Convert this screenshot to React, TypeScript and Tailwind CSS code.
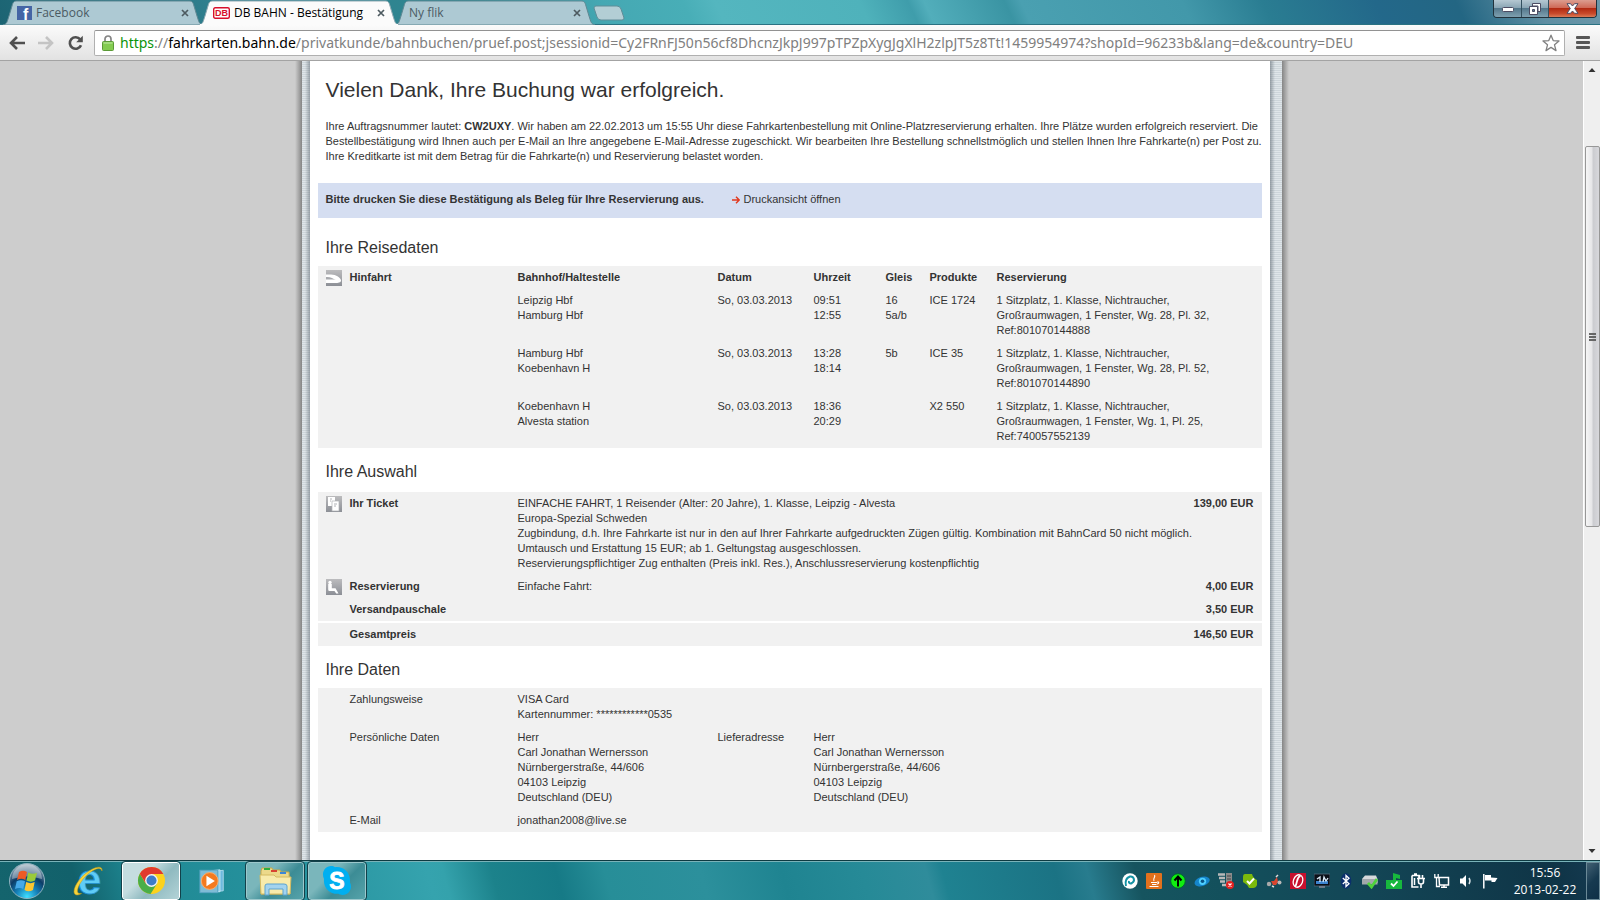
import type { ReactNode } from "react";

const PAGE_FONT = "font-['Liberation_Sans',Arial,sans-serif]";
const UI_FONT = "font-['Open_Sans','Noto_Sans',sans-serif]";

function TabShape({ active = false }: { active?: boolean }) {
  return (
    <svg className="absolute inset-0 h-full w-full" viewBox="0 0 200 25" preserveAspectRatio="none" aria-hidden="true">
      <path
        d="M0 25 C4 24 4 22 6 16 L9 6 C10 2 11 1 14 1 H186 C189 1 190 2 191 6 L194 16 C196 22 196 24 200 25 Z"
        fill={active ? "#fbfbfb" : "#adc9d3"}
        stroke={active ? "#8fa9b2" : "#5f8893"}
        strokeWidth="1"
      />
      {active && <rect x="1" y="24" width="198" height="2" fill="#fbfbfb" />}
    </svg>
  );
}

function CloseGlyph() {
  return (
    <svg width="8" height="8" viewBox="0 0 8 8" aria-hidden="true">
      <path d="M1 1 L7 7 M7 1 L1 7" stroke="#4d5a60" strokeWidth="1.7" />
    </svg>
  );
}

function Tab({ icon, label, active = false }: { icon?: ReactNode; label: string; active?: boolean }) {
  return (
    <div className={`relative -mr-[4px] h-[25px] w-[200px] ${active ? "z-10" : ""}`}>
      <TabShape active={active} />
      <div className="relative flex h-full items-center px-[14px]">
        <button className={`flex flex-1 items-center gap-[4px] text-left text-[12px] leading-[16px] ${active ? "text-black" : "text-[#4b5b63]"}`}>
          {icon}
          <span className="whitespace-nowrap">{label}</span>
        </button>
        <button aria-label={`${label} schließen`}>
          <CloseGlyph />
        </button>
      </div>
    </div>
  );
}

function FacebookIcon() {
  return (
    <svg width="15" height="14" viewBox="0 0 15 14" aria-hidden="true">
      <rect width="15" height="14" fill="#4565a5" />
      <text x="6" y="14" fontSize="16" fontWeight="700" fill="#fff" fontFamily="Liberation Sans, sans-serif">f</text>
    </svg>
  );
}

function DbIcon() {
  return (
    <svg width="17" height="12" viewBox="0 0 17 12" aria-hidden="true">
      <rect x=".7" y=".7" width="15.6" height="10.6" rx="1.5" fill="#fff" stroke="#d80f2b" strokeWidth="1.4" />
      <text x="8.5" y="9.3" fontSize="9" fontWeight="700" textAnchor="middle" fill="#d80f2b" fontFamily="Liberation Sans, sans-serif">DB</text>
    </svg>
  );
}

function TitleBar() {
  return (
    <header className="relative flex h-[25px] shrink-0 items-start border-b border-[#2a7282] bg-[linear-gradient(65deg,#1c6473_0%,#2f7f8e_14%,#2f8791_30%,#45a8b3_38%,#48aeb7_43%,#54b6bf_45%,#4fb2bb_54%,#3f9dab_57%,#52aebb_58%,#3a94a3_63%,#4aa0b1_64%,#4298aa_74%,#2a7d92_79%,#23688a_86%,#236683_91%,#5e8ea2_96%,#6b98aa_100%)]">
      <nav className="flex items-start pl-[3px]">
        <Tab icon={<FacebookIcon />} label="Facebook" />
        <Tab icon={<DbIcon />} label="DB BAHN - Bestätigung" active />
        <Tab label="Ny flik" />
        <button aria-label="Ny flik" className="ml-[2px] mt-[5px]">
          <svg width="32" height="16" viewBox="0 0 32 16" aria-hidden="true">
            <path d="M3 1 H24 Q27 1 28 4 L31 13 Q31 15 29 15 H8 Q5 15 4 12 L1 3 Q1 1 3 1 Z" fill="#b3ced5" stroke="#5f8d98" />
          </svg>
        </button>
      </nav>
      <div className="ml-auto mr-[3px] flex h-[18px] overflow-hidden rounded-b-[4px] border border-t-0 border-[#22323c]">
        <button aria-label="Minimieren" className="flex w-[28px] items-center justify-center border-r border-[#33505f] bg-[linear-gradient(#b5c8d2,#8ba6b5_45%,#54788c_50%,#7fa0b0)]">
          <svg width="12" height="6" viewBox="0 0 12 6" className="mt-[3px]" aria-hidden="true">
            <rect x=".5" y=".5" width="11" height="4" rx="1" fill="#fff" stroke="#4c4c63" />
          </svg>
        </button>
        <button aria-label="Verkleinern" className="flex w-[27px] items-center justify-center border-r border-[#33505f] bg-[linear-gradient(#b5c8d2,#8ba6b5_45%,#54788c_50%,#7fa0b0)]">
          <svg width="12" height="12" viewBox="0 0 12 12" aria-hidden="true">
            <path d="M3.5 .5 H11.5 V8.5 H9 V3 H3.5 Z" fill="#fff" stroke="#4c4c63" />
            <path d="M.5 3.5 H8.5 V11.5 H.5 Z M3.5 6.5 V8.5 H5.5 V6.5 Z" fill="#fff" fillRule="evenodd" stroke="#4c4c63" />
          </svg>
        </button>
        <button aria-label="Schließen" className="flex w-[47px] items-center justify-center bg-[linear-gradient(#dc9d8f,#cf6a57_45%,#b22a12_50%,#c84a2b_80%,#db7a55)]">
          <svg width="13" height="11" viewBox="0 0 13 11" aria-hidden="true">
            <path d="M1 .7 H4.5 L6.5 3 L8.5 .7 H12 L8.7 5.5 L12 10.3 H8.5 L6.5 8 L4.5 10.3 H1 L4.3 5.5 Z" fill="#fff" stroke="#4c4c63" />
          </svg>
        </button>
      </div>
    </header>
  );
}

function Toolbar() {
  return (
    <div className="flex h-[36px] shrink-0 items-center border-b border-[#a3a3a3] bg-[linear-gradient(#fbfbfb,#e2e2e2)] pl-[9px] pr-[10px]">
      <button aria-label="Zurück" className="mr-[13px]">
        <svg width="16" height="14" viewBox="0 0 16 14" aria-hidden="true">
          <path d="M8 1 L2 7 L8 13 M2.5 7 H16" fill="none" stroke="#505050" strokeWidth="2.6" />
        </svg>
      </button>
      <button aria-label="Vorwärts" className="mr-[13px]">
        <svg width="16" height="14" viewBox="0 0 16 14" aria-hidden="true">
          <path d="M8 1 L14 7 L8 13 M13.5 7 H0" fill="none" stroke="#c4c4c4" strokeWidth="2.6" />
        </svg>
      </button>
      <button aria-label="Neu laden" className="mr-[10px]">
        <svg width="17" height="16" viewBox="0 0 17 16" aria-hidden="true">
          <path d="M13.2 4.4 A5.8 5.8 0 1 0 14 10.2" fill="none" stroke="#505050" strokeWidth="2.6" />
          <path d="M15.8 .8 V7.2 H9.2 Z" fill="#505050" />
        </svg>
      </button>
      <div className="flex h-[26px] min-w-0 flex-1 items-center rounded-[2px] border border-[#b0b0b0] border-t-[#929292] bg-white pl-[7px] pr-[4px]">
        <svg width="12" height="16" viewBox="0 0 12 16" className="mr-[6px] shrink-0" aria-hidden="true">
          <path d="M3 8 V4 A3 3 0 0 1 9 4 V8" fill="none" stroke="#858585" strokeWidth="1.7" />
          <rect x=".5" y="6.5" width="11" height="9" rx="1" fill="#83cb50" stroke="#5b9a37" />
          <path d="M1.5 8 H10.5" stroke="#c3ebaa" />
        </svg>
        <div role="textbox" aria-label="Adresse" className="min-w-0 flex-1 overflow-hidden whitespace-nowrap font-['Noto_Sans',sans-serif] text-[14px] leading-[20px] text-[#808080]">
          <span className="text-[#0a930a]">https</span>://<span className="text-black">fahrkarten.bahn.de</span>/privatkunde/bahnbuchen/pruef.post;jsessionid=Cy2FRnFJ50n56cf8DhcnzJkpJ997pTPZpXygJgXlH2zlpJT5z8Tt!1459954974?shopId=96233b&amp;lang=de&amp;country=DEU
        </div>
        <button aria-label="Lesezeichen">
          <svg width="18" height="18" viewBox="0 0 18 18" aria-hidden="true">
            <path d="M9 1.2 L11.2 6.6 L17 7 L12.5 10.8 L14 16.6 L9 13.4 L4 16.6 L5.5 10.8 L1 7 L6.8 6.6 Z" fill="#fff" stroke="#808080" strokeWidth="1.3" strokeLinejoin="round" />
          </svg>
        </button>
      </div>
      <button aria-label="Menü" className="ml-[11px] flex w-[14px] flex-col gap-[2px]">
        <span className="h-[3px] rounded-[1px] bg-[#565656]" />
        <span className="h-[3px] rounded-[1px] bg-[#565656]" />
        <span className="h-[3px] rounded-[1px] bg-[#565656]" />
      </button>
    </div>
  );
}

function RowIcon({ kind }: { kind: "train" | "ticket" | "seat" }) {
  return (
    <svg width="16" height="16" viewBox="0 0 16 16" aria-hidden="true">
      <defs>
        <linearGradient id={`g-${kind}`} x1="0" y1="0" x2="0" y2="1">
          <stop offset="0" stopColor="#bcbcbe" />
          <stop offset="1" stopColor="#8c8f96" />
        </linearGradient>
      </defs>
      <rect width="16" height="16" fill={`url(#g-${kind})`} />
      {kind === "train" && (
        <>
          <path d="M0 4.5 H5 C10 4.5 15 8 15 10.5 C15 12.5 12 13 9 13 H0 Z" fill="#fff" />
          <path d="M0 7 C4 6.5 7 8 9.5 10 H0 Z" fill="#a9abaf" />
          <path d="M0 9.5 H9 V10.5 H0 Z" fill="#fff" />
        </>
      )}
      {kind === "ticket" && (
        <>
          <rect x="2" y="1" width="7" height="9" fill="#fff" />
          <rect x="6" y="5" width="7" height="10" fill="#fff" stroke="#b0b2b6" strokeWidth=".7" />
          <path d="M4 3 H6 M4 5 H5 M8 8 H11 M8 10 H10" stroke="#b0b2b6" />
        </>
      )}
      {kind === "seat" && (
        <>
          <circle cx="4" cy="3.5" r="1.7" fill="#fff" />
          <path d="M2.2 5 H5.8 V9.3 H9.5 L12.5 14.5 H10.2 L8.5 12 H3.5 Q2.2 12 2.2 10.5 Z" fill="#fff" />
        </>
      )}
    </svg>
  );
}

const legs = [
  { from: "Leipzig Hbf", to: "Hamburg Hbf", date: "So, 03.03.2013", dep: "09:51", arr: "12:55", p1: "16", p2: "5a/b", product: "ICE 1724", wagon: "Wg. 28, Pl. 32,", ref: "801070144888" },
  { from: "Hamburg Hbf", to: "Koebenhavn H", date: "So, 03.03.2013", dep: "13:28", arr: "18:14", p1: "5b", p2: "", product: "ICE 35", wagon: "Wg. 28, Pl. 52,", ref: "801070144890" },
  { from: "Koebenhavn H", to: "Alvesta station", date: "So, 03.03.2013", dep: "18:36", arr: "20:29", p1: "", p2: "", product: "X2 550", wagon: "Wg. 1, Pl. 25,", ref: "740057552139" },
];

const cell = "py-[4px] pr-0 pl-0 text-left align-top";

function SectionTitle({ children }: { children: ReactNode }) {
  return <h2 className="px-[8px] text-[16px] leading-[20px]">{children}</h2>;
}

function Journey() {
  return (
    <section className="mt-[20px]">
      <SectionTitle>Ihre Reisedaten</SectionTitle>
      <table className="mt-[8px] w-full table-fixed border-collapse bg-[#f1f1f1]">
        <colgroup>
          <col className="w-[32px]" />
          <col className="w-[168px]" />
          <col className="w-[200px]" />
          <col className="w-[96px]" />
          <col className="w-[72px]" />
          <col className="w-[44px]" />
          <col className="w-[67px]" />
          <col />
        </colgroup>
        <thead>
          <tr>
            <td className="pl-[8px] pt-[4px] align-top"><RowIcon kind="train" /></td>
            {["Hinfahrt", "Bahnhof/Haltestelle", "Datum", "Uhrzeit", "Gleis", "Produkte", "Reservierung"].map((h) => (
              <th key={h} className={cell}>{h}</th>
            ))}
          </tr>
        </thead>
        <tbody>
          {legs.map((l) => (
            <tr key={l.ref}>
              <td />
              <td />
              <td className={cell}>{l.from}<br />{l.to}</td>
              <td className={cell}>{l.date}</td>
              <td className={cell}>{l.dep}<br />{l.arr}</td>
              <td className={cell}>{l.p1}<br />{l.p2}</td>
              <td className={cell}>{l.product}</td>
              <td className={cell}>
                1 Sitzplatz, 1. Klasse, Nichtraucher,<br />
                Großraumwagen, 1 Fenster, {l.wagon}<br />
                Ref:{l.ref}
              </td>
            </tr>
          ))}
        </tbody>
      </table>
    </section>
  );
}

function Selection() {
  return (
    <section className="mt-[14px]">
      <SectionTitle>Ihre Auswahl</SectionTitle>
      <table className="mt-[10px] w-full table-fixed border-collapse bg-[#f1f1f1]">
        <colgroup>
          <col className="w-[32px]" />
          <col className="w-[168px]" />
          <col />
          <col className="w-[72px]" />
        </colgroup>
        <tbody>
          <tr>
            <td className="pl-[8px] pt-[4px] align-top"><RowIcon kind="ticket" /></td>
            <th className={cell}>Ihr Ticket</th>
            <td className={`${cell} whitespace-nowrap`}>
              EINFACHE FAHRT, 1 Reisender (Alter: 20 Jahre), 1. Klasse, Leipzig - Alvesta<br />
              Europa-Spezial Schweden<br />
              Zugbindung, d.h. Ihre Fahrkarte ist nur in den auf Ihrer Fahrkarte aufgedruckten Zügen gültig. Kombination mit BahnCard 50 nicht möglich.<br />
              Umtausch und Erstattung 15 EUR; ab 1. Geltungstag ausgeschlossen.<br />
              Reservierungspflichtiger Zug enthalten (Preis inkl. Res.), Anschlussreservierung kostenpflichtig
            </td>
            <td className="py-[4px] pr-[8px] text-right align-top font-bold">139,00 EUR</td>
          </tr>
          <tr>
            <td className="pl-[8px] pt-[4px] align-top"><RowIcon kind="seat" /></td>
            <th className={cell}>Reservierung</th>
            <td className={cell}>Einfache Fahrt:</td>
            <td className="py-[4px] pr-[8px] text-right align-top font-bold">4,00 EUR</td>
          </tr>
          <tr>
            <td />
            <th className={cell}>Versandpauschale</th>
            <td />
            <td className="py-[4px] pr-[8px] text-right align-top font-bold">3,50 EUR</td>
          </tr>
        </tbody>
        <tfoot>
          <tr className="border-t-2 border-white">
            <td />
            <th className={cell}>Gesamtpreis</th>
            <td />
            <td className="py-[4px] pr-[8px] text-right align-top font-bold">146,50 EUR</td>
          </tr>
        </tfoot>
      </table>
    </section>
  );
}

function Address() {
  return (
    <>
      Herr<br />
      Carl Jonathan Wernersson<br />
      Nürnbergerstraße, 44/606<br />
      04103 Leipzig<br />
      Deutschland (DEU)
    </>
  );
}

function PersonalData() {
  return (
    <section className="mt-[14px]">
      <SectionTitle>Ihre Daten</SectionTitle>
      <table className="mt-[8px] w-full table-fixed border-collapse bg-[#f1f1f1]">
        <colgroup>
          <col className="w-[32px]" />
          <col className="w-[168px]" />
          <col className="w-[200px]" />
          <col className="w-[96px]" />
          <col />
        </colgroup>
        <tbody>
          <tr>
            <td />
            <td className={cell}>Zahlungsweise</td>
            <td className={cell} colSpan={3}>VISA Card<br />Kartennummer: ************0535</td>
          </tr>
          <tr>
            <td />
            <td className={cell}>Persönliche Daten</td>
            <td className={cell}><Address /></td>
            <td className={cell}>Lieferadresse</td>
            <td className={cell}><Address /></td>
          </tr>
          <tr>
            <td />
            <td className={cell}>E-Mail</td>
            <td className={cell} colSpan={3}>jonathan2008@live.se</td>
          </tr>
        </tbody>
      </table>
    </section>
  );
}

function Rail({ left = false }: { left?: boolean }) {
  return (
    <div className={`shrink-0 ${left ? "w-[8px] bg-[linear-gradient(270deg,rgba(90,100,110,.5),transparent_5px),repeating-linear-gradient(#dfe5e9_0_1px,#cdd5da_1px_2px)]" : "w-[12px] bg-[linear-gradient(90deg,rgba(90,100,110,.55),transparent_5px),repeating-linear-gradient(#dfe5e9_0_1px,#cdd5da_1px_2px)]"}`} />
  );
}

function Page() {
  return (
    <main className={`flex min-w-0 flex-1 justify-center overflow-hidden bg-[#cdcdcd] text-[11px] leading-[15px] text-[#333] ${PAGE_FONT}`}>
      <div className="w-[7px] bg-[linear-gradient(90deg,#cdcdcd,#858585)]" />
      <Rail left />
      <div className="w-full max-w-[960px] bg-white px-[8px]">
        <h1 className="px-[8px] pt-[16px] text-[21px] leading-[26px]">Vielen Dank, Ihre Buchung war erfolgreich.</h1>
        <p className="whitespace-nowrap px-[8px] pt-[16px]">
          Ihre Auftragsnummer lautet: <b>CW2UXY</b>. Wir haben am 22.02.2013 um 15:55 Uhr diese Fahrkartenbestellung mit Online-Platzreservierung erhalten. Ihre Plätze wurden erfolgreich reserviert. Die<br />
          Bestellbestätigung wird Ihnen auch per E-Mail an Ihre angegebene E-Mail-Adresse zugeschickt. Wir bearbeiten Ihre Bestellung schnellstmöglich und stellen Ihnen Ihre Fahrkarte(n) per Post zu.<br />
          Ihre Kreditkarte ist mit dem Betrag für die Fahrkarte(n) und Reservierung belastet worden.
        </p>
        <div className="mt-[19px] flex h-[35px] items-center bg-[#d5def1] px-[8px] pb-[2px]">
          <b className="min-w-[398px]">Bitte drucken Sie diese Bestätigung als Beleg für Ihre Reservierung aus.</b>
          <a href="#druck" className="ml-[8px] flex items-center gap-[4px]">
            <svg width="8" height="8" viewBox="0 0 8 8" aria-hidden="true">
              <path d="M0 4 H7 M4 .8 L7.2 4 L4 7.2" fill="none" stroke="#e2381d" strokeWidth="1.4" />
            </svg>
            Druckansicht öffnen
          </a>
        </div>
        <Journey />
        <Selection />
        <PersonalData />
      </div>
      <Rail />
      <div className="w-[7px] bg-[linear-gradient(90deg,#858585,#cdcdcd)]" />
    </main>
  );
}

function Scrollbar() {
  return (
    <aside className="flex w-[17px] shrink-0 flex-col items-center border-l border-white bg-[#efefef]">
      <svg width="8" height="18" viewBox="0 0 8 18" aria-hidden="true"><path d="M.5 11 L4 7 L7.5 11 Z" fill="#333" /></svg>
      <div className="h-[67px]" />
      <div className="flex h-[381px] w-[15px] flex-col items-center justify-center gap-[1px] rounded-[2px] border border-[#979797] bg-[linear-gradient(90deg,#f6f6f6,#e6e6e8_45%,#cbccd0_55%,#d8d8dc)]">
        <span className="h-[2px] w-[7px] bg-[#666]" />
        <span className="h-[2px] w-[7px] bg-[#666]" />
        <span className="h-[2px] w-[7px] bg-[#666]" />
      </div>
      <svg className="mt-auto" width="8" height="18" viewBox="0 0 8 18" aria-hidden="true"><path d="M.5 7 L4 11 L7.5 7 Z" fill="#333" /></svg>
    </aside>
  );
}

function TaskButton({ label, children, active = false }: { label: string; children: ReactNode; active?: boolean }) {
  return (
    <button
      aria-label={label}
      className={`mr-[4px] flex h-[38px] w-[58px] items-center justify-center rounded-[3px] border outline outline-[#12414a] ${active ? "border-white bg-[linear-gradient(135deg,#c5dde0_0%,#c5dde0_35%,#8fbac0_60%,#b3d3d7)]" : "border-[#9cc8cc] bg-[linear-gradient(135deg,#7ab6bb_0%,#7ab6bb_35%,#3c8c95_60%,#56a3aa)]"}`}
    >
      {children}
    </button>
  );
}

function Orb() {
  return (
    <svg width="38" height="38" viewBox="0 0 38 38" aria-hidden="true">
      <defs>
        <radialGradient id="orb" cx=".5" cy=".95" r=".9">
          <stop offset="0" stopColor="#3fe0ff" />
          <stop offset=".35" stopColor="#1580b8" />
          <stop offset=".65" stopColor="#0c3c66" />
          <stop offset="1" stopColor="#93a9b8" />
        </radialGradient>
      </defs>
      <circle cx="19" cy="19" r="17.5" fill="url(#orb)" stroke="#8fb3c0" />
      <path d="M4 17 A15 15 0 0 1 34 17 Q19 12 4 17 Z" fill="#fff" opacity=".35" />
      <path d="M11 10 Q15 7.5 19 10 L17.3 18 Q13.5 15.5 9 18 Z" fill="#ee5a25" />
      <path d="M20.3 10.5 Q24.5 13 29 10.8 L27 18.6 Q23 20.8 18.5 18.6 Z" fill="#9acb3b" />
      <path d="M8.7 19.3 Q13 17 17 19.3 L15.2 27 Q11.5 24.8 7 27 Z" fill="#45a9e8" />
      <path d="M18.2 20 Q22.5 22.3 26.7 20 L25 28 Q20.5 30.5 16.5 28 Z" fill="#fcc630" />
    </svg>
  );
}

function IeIcon() {
  return (
    <svg width="32" height="32" viewBox="0 0 32 32" aria-hidden="true">
      <text x="17.5" y="29" fontSize="43" fontWeight="700" textAnchor="middle" fill="#5fccf6" stroke="#1f8fd0" strokeWidth=".8" fontFamily="Liberation Sans, sans-serif">e</text>
      <path d="M30 6 C31 1.5 26 1 19.5 4.5 C10.5 9.2 2 20 2 26.5 C2 31 6.5 30.5 9.5 28.5 C6 29 5 27.5 5.6 24.5 C7 18 14 9.5 21 5.5 C25.5 3 29 2.5 30 6 Z" fill="#f5d33a" stroke="#c89a10" strokeWidth=".5" />
    </svg>
  );
}

function ChromeIcon() {
  return (
    <svg width="29" height="29" viewBox="0 0 30 30" aria-hidden="true">
      <circle cx="15" cy="15" r="14" fill="#fcd21d" />
      <path d="M2.9 8 A14 14 0 0 0 14 29 L20.8 18 L15 15 L9 18 Z" fill="#4aae48" />
      <path d="M2.9 8 A14 14 0 0 1 27.3 8.4 H15 L9.2 18 Z" fill="#e03a2d" />
      <circle cx="15" cy="15" r="6.6" fill="#f2f2f2" />
      <circle cx="15" cy="15" r="5.2" fill="#3d7cc9" />
    </svg>
  );
}

function PlayerIcon() {
  return (
    <svg width="28" height="26" viewBox="0 0 30 27" aria-hidden="true">
      <path d="M18 3 L26 2 V24 L18 25 Z" fill="#6db9dd" stroke="#bfe4f4" strokeWidth=".8" />
      <path d="M13 2.5 L22.5 1.5 V25 L13 25.5 Z" fill="#8ccbe6" stroke="#cdebf7" strokeWidth=".8" />
      <rect x="1" y="2" width="19" height="24" fill="#7fbcd6" stroke="#5aa5c4" />
      <circle cx="11.5" cy="13.5" r="9" fill="#f47a1f" stroke="#fbb070" />
      <path d="M8 8 L17 13.5 L8 19 Z" fill="#fff" />
    </svg>
  );
}

function FolderIcon() {
  return (
    <svg width="34" height="30" viewBox="0 0 34 30" aria-hidden="true">
      <path d="M3 5 L4 2 H14 L15 4 H22 L23 6 H31 L32 28 H3 Z" fill="#ecd98a" stroke="#c7a94a" />
      <rect x="6" y="2" width="6" height="2" fill="#2fae3c" />
      <rect x="13" y="4" width="6" height="2" fill="#d84432" />
      <rect x="22" y="6" width="6" height="2" fill="#3b86d6" />
      <path d="M2 9 H16 L18 11 H33 L32 28 H3 Z" fill="#f8ebab" stroke="#d4bb62" />
      <path d="M7 29 V20 Q7 18 9 18 H26 Q29 18 29 20 V29 H25 V23 H11 V29 Z" fill="#a3d3ee" stroke="#5da3cf" />
    </svg>
  );
}

function SkypeIcon() {
  return (
    <svg width="30" height="31" viewBox="0 0 30 31" aria-hidden="true">
      <path d="M9 1 C11 1 12 1.6 13 2.2 C21 1 29 7 28 17.5 C31 23 27 30 20.5 30 C18.5 30 17.5 29.4 16.5 28.8 C8 29.5 1 23 2 14 C-1 7.5 3 1 9 1 Z" fill="#00aff0" />
      <text x="15" y="23.5" fontSize="23" fontWeight="700" textAnchor="middle" fill="#fff" stroke="#fff" strokeWidth=".8" fontFamily="Liberation Sans, sans-serif">S</text>
    </svg>
  );
}

const trayIcons: { name: string; art: ReactNode }[] = [
  { name: "Sync", art: (<><circle cx="8" cy="8" r="7.7" fill="#fff" /><path d="M4 13 C3 9 4 5 8 3.5 C12 3 13.5 8 10 10 C8 11 6.5 10 7 8" fill="none" stroke="#1593a5" strokeWidth="2" /></>) },
  { name: "Java", art: (<><rect width="16" height="16" rx="1" fill="#e2711d" /><path d="M8.5 2 C10 4 6.5 5 8 8 M5 9.5 H11 M6 11.5 H10.5 M3.5 13.5 H12.5 M11 9 C13.5 8.5 13 10.8 11 11" fill="none" stroke="#fff" strokeWidth="1.1" /></>) },
  { name: "Upload", art: (<><circle cx="8" cy="8" r="7.3" fill="#10ee10" stroke="#063" /><path d="M8 13.5 V4 M4.5 7.5 L8 3.5 L11.5 7.5" fill="none" stroke="#000" strokeWidth="2" /></>) },
  { name: "Eye", art: (<><ellipse cx="8" cy="8.5" rx="7.8" ry="4.6" fill="#1585cb" transform="rotate(-18 8 8)" /><circle cx="8.5" cy="8.3" r="3.6" fill="#4ed0ff" /><circle cx="8.5" cy="8.3" r="1.8" fill="#085487" /></>) },
  { name: "Server", art: (<><path d="M0 1.5 H7 M1 5 H7 M2 8.5 H7 M4 12 H8" stroke="#b8b8b8" strokeWidth="2.4" /><rect x="8" y="0" width="6" height="14" fill="#8b8b8b" /><path d="M9 3 H13 M9 6 H13" stroke="#444" /><circle cx="12" cy="12" r="4" fill="#e32020" /><path d="M10.5 10.5 L13.5 13.5 M13.5 10.5 L10.5 13.5" stroke="#fff" strokeWidth="1.2" /></>) },
  { name: "Check", art: (<><path d="M3 1 H10 Q11 5 15 7 V12 Q14 15 11 15 H7 Q5 11 1 9 V4 Q1 1 3 1 Z" fill="#7cb90c" /><path d="M5 8 L7.5 10.5 L12 5.5" fill="none" stroke="#fff" strokeWidth="2" /></>) },
  { name: "Plane", art: (<><path d="M5 8 L8 8 L11 4 L12 9 L10 12 L7 12 Z" fill="#d9452f" /><circle cx="3" cy="11" r="2.2" fill="#aaa" /><circle cx="13.5" cy="9.5" r="2" fill="#b8b8b8" /><path d="M10 4 L12 2 M6 13 L8 14" stroke="#ddd" strokeWidth="1.5" /></>) },
  { name: "Quill", art: (<><rect width="16" height="16" fill="#c8102e" /><ellipse cx="8" cy="8" rx="4.6" ry="6.4" fill="none" stroke="#fff" strokeWidth="1.3" transform="rotate(20 8 8)" /><path d="M10.5 2.5 C6 5 8 9 5 14" fill="none" stroke="#fff" strokeWidth="1.8" /></>) },
  { name: "Display", art: (<><rect y="1" width="16" height="12" fill="#0a0f18" stroke="#536a7c" strokeWidth=".8" /><path d="M2 8 H14 V11 H2 Z" fill="#3d83cf" /><path d="M3 6 L6 4 V9 M9 9 L10 4 L12 8 L14 5" fill="none" stroke="#dfeefa" strokeWidth="1.3" /><path d="M5 14 H11" stroke="#889" strokeWidth="1.5" /></>) },
  { name: "Bluetooth", art: (<><ellipse cx="8" cy="8" rx="5.3" ry="7.8" fill="#0b2f6c" /><path d="M4.8 5 L11 10.8 L8 13.6 V2.4 L11 5.2 L4.8 11" fill="none" stroke="#fff" strokeWidth="1.3" /></>) },
  { name: "Drive", art: (<><path d="M0 6 L3 2.5 H14 L15.5 6 V10 H0 Z" fill="#d6d9db" /><path d="M0 6 H15.5 V11.5 H0 Z" fill="#a2a8ac" /><path d="M6 10 L9.5 14 L15 6" fill="none" stroke="#4fd13c" strokeWidth="2.8" /></>) },
  { name: "Music", art: (<><path d="M0 7 H7 V0 L14 2 V6 L10 5 V7 H16 V16 H0 Z" fill="#17b83d" /><path d="M5 10.5 L7.5 13 L11.5 8.5" fill="none" stroke="#fff" strokeWidth="1.8" /></>) },
  { name: "Power", art: (<><path d="M2 2.5 H9 V5 M2 2.5 V14 H8.5 M4 1 H7" fill="none" stroke="#fff" strokeWidth="1.6" /><path d="M7 5.5 H15 M8.5 6 V9 Q8.5 11 11 11 Q13.5 11 13.5 9 V6 M9.5 2 V5 M12.5 2 V5 M11 11 V15" fill="none" stroke="#fff" strokeWidth="1.6" /><path d="M4.5 5 V12" stroke="#fff" strokeWidth="1.5" /></>) },
  { name: "Network", art: (<><path d="M5 4.5 H14.5 V12 H5.5 Z M7 14.3 H13 M10 12 V14" fill="none" stroke="#fff" strokeWidth="1.5" /><path d="M.8 1 V4.5 H4.2 V1 M2.5 4 V13.5 H6" fill="none" stroke="#fff" strokeWidth="1.3" /></>) },
  { name: "Volume", art: (<><path d="M2 5.5 H4.5 L8 2 V14 L4.5 10.5 H2 Z" fill="#fff" /><path d="M11 5 Q13 8 11 11" fill="none" stroke="#dce7ea" strokeWidth="1.4" /></>) },
  { name: "Flag", art: (<><path d="M1.8 1 V15.5" stroke="#fff" strokeWidth="1.5" /><path d="M3 2 H9 V4.5 L15.5 5 L13 9 H9.5 V7.5 H3 Z" fill="#fff" /></>) },
];

function Taskbar() {
  return (
    <footer className="flex h-[40px] shrink-0 items-center border-t border-[#0e3b42] bg-[linear-gradient(75deg,#14646d_0%,#12616b_5%,#1f8994_9%,#2894a0_20%,#35a3ae_27%,#34a2ac_28%,#1c828b_31%,#167a86_35%,#278e98_38%,#2c909c_44%,#1f8491_49%,#268a97_54%,#2f8c9b_58%,#1f8291_59%,#1b7384_66%,#287c8e_68%,#16545f_71%,#13505c_76%,#134656_85%,#0f3446_97%,#153b52_100%)] shadow-[inset_0_1px_0_#79b3b9]">
      <button aria-label="Start" className="ml-[8px] mr-[26px]"><Orb /></button>
      <button aria-label="Internet Explorer" className="mr-[18px]"><IeIcon /></button>
      <TaskButton label="Chrome" active><ChromeIcon /></TaskButton>
      <button aria-label="Media Player" className="mr-[4px] flex w-[58px] items-center justify-center"><PlayerIcon /></button>
      <TaskButton label="Explorer"><FolderIcon /></TaskButton>
      <TaskButton label="Skype"><SkypeIcon /></TaskButton>
      <div className="ml-auto flex items-center gap-[8px]">
        {trayIcons.map((t) => (
          <button key={t.name} aria-label={t.name}>
            <svg width="16" height="16" viewBox="0 0 16 16" aria-hidden="true">{t.art}</svg>
          </button>
        ))}
      </div>
      <button className="ml-[6px] flex w-[82px] flex-col items-center text-[12px] leading-[17px] text-white">
        <span>15:56</span>
        <span>2013-02-22</span>
      </button>
      <button aria-label="Desktop anzeigen" className="h-[38px] w-[14px] border border-[#6b8a97] bg-[linear-gradient(135deg,#426173,#163a50_50%,#0f3046)]" />
    </footer>
  );
}

export default function App() {
  return (
    <div className={`flex h-screen flex-col overflow-hidden ${UI_FONT}`}>
      <TitleBar />
      <Toolbar />
      <div className="flex min-h-0 flex-1">
        <Page />
        <Scrollbar />
      </div>
      <Taskbar />
    </div>
  );
}
